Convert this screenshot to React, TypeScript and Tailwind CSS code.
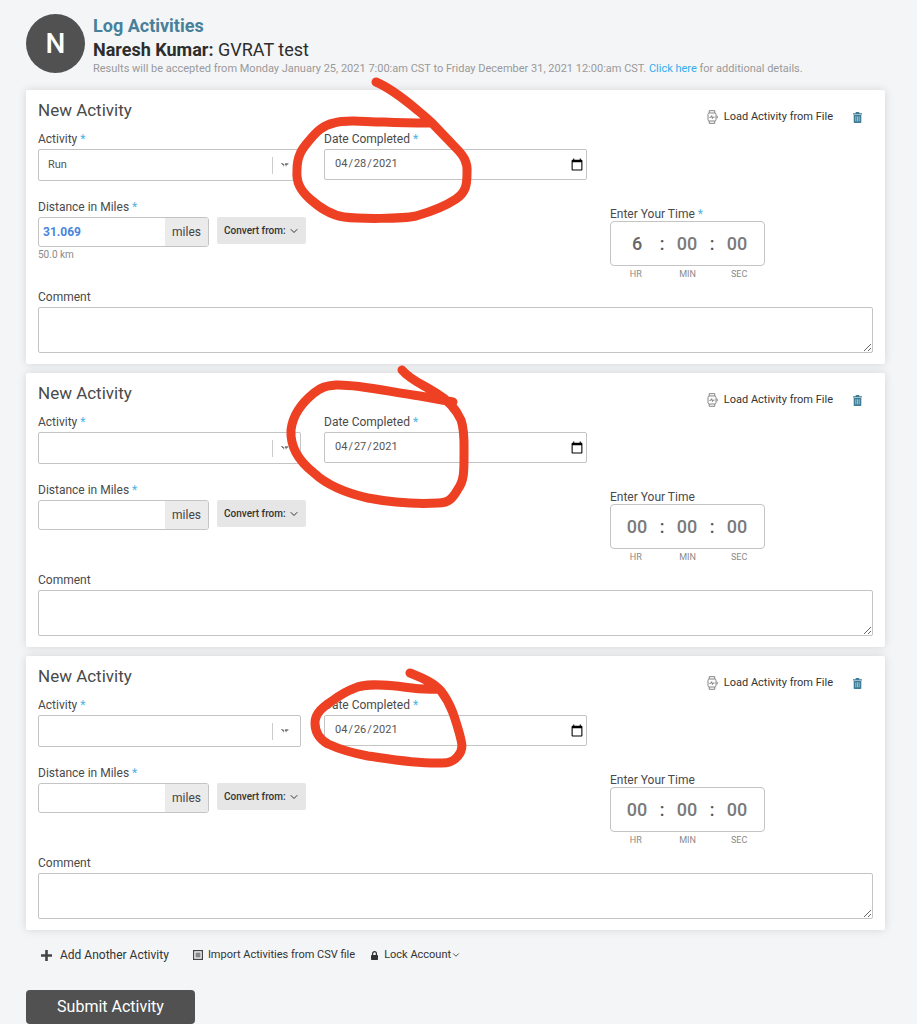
import { useId, useState } from "react";
import { ChevronDown } from "lucide-react";

type Entry = {
    activity: string;
    date: string;
    miles: string;
    hr: string;
    min: string;
    sec: string;
    comment: string;
};

const initialEntries: Entry[] = [
    { activity: 'Run', date: '2021-04-28', miles: '31.069', hr: '6', min: '', sec: '', comment: '' },
    { activity: '', date: '2021-04-27', miles: '', hr: '', min: '', sec: '', comment: '' },
    { activity: '', date: '2021-04-26', miles: '', hr: '', min: '', sec: '', comment: '' },
];

// hand drawn circles round the dates, origin is the top left of the date field
const marks = [
    "M52 -50 C66 -44 80 -33 92 -23 C98 -18 103 -14 108 -9 L132 16 C140 24 144 31 143 41 C143 53 142 60 132 67 C120 75 106 80 92 84 C78 87 35 87 20 85 C5 83 -6 74 -14 67 C-24 58 -28 50 -27 38 C-27 24 -22 17 -16 10 C-8 0 -1 -7 10 -9 C22 -13 40 -10 60 -10 C80 -9 95 -9 106 -9",
    "M78 -45 C86 -35 100 -30 112 -22 C124 -15 132 -6 137 5 C141 16 140 30 140 42 C140 56 140 66 134 74 C129 83 125 88 114 88 C95 89 70 88 44 83 C22 78 4 71 -10 58 C-24 47 -34 32 -33 15 C-31 -2 -20 -14 -10 -22 C-3 -28 2 -29 12 -30 C35 -31 70 -22 96 -19 L129 -13",
    "M86 -25 C98 -20 109 -16 117 -7 C127 6 131 20 135 34 C138 45 140 51 134 58 C130 63 126 65 118 65 C92 66 65 61 44 58 C28 55 15 51 4 46 C-5 41 -9 34 -9 25 C-9 15 -1 9 8 3 C16 -3 23 -7 31 -10 C42 -15 60 -13 72 -12 C88 -10 95 -8 113 -9",
];

function WatchIcon() {
    return (
        <svg className="h-[14px] w-[11px] shrink-0" viewBox="0 0 11 14" fill="none" stroke="#777" strokeWidth="0.9" aria-hidden="true">
            <rect x="1" y="3" width="8" height="8" rx="1.5" />
            <path d="M2.2 3V.7h5.6V3M2.2 11v2.3h5.6V11M10.2 5.8v2.6" />
            <path d="M2.5 7.5l1.3-.3.9-1.5.7 2.8.8-1.4h1.3" strokeWidth="1" />
        </svg>
    );
}

function TrashIcon() {
    return (
        <svg className="h-[11px] w-[9px]" viewBox="0 0 9 11" aria-hidden="true">
            <path d="M0 1.2h2.7V0h3.6v1.2H9v1.3H0z" fill="#3f7d96" />
            <path d="M.7 3h7.6v7.2a.8.8 0 0 1-.8.8h-6a.8.8 0 0 1-.8-.8z" fill="#3f7d96" />
            <path d="M2.8 4.3v5M4.5 4.3v5M6.2 4.3v5" stroke="#b5d0da" strokeWidth="0.8" />
        </svg>
    );
}

function Star() {
    return <span className="text-[#4db3e6]"> *</span>;
}

function ActivityCard({ entry, mark, onChange }: { entry: Entry, mark: string, onChange: (e: any) => void }) {
    const id = useId();
    const labelClass = "mb-[3px] block text-[12px] leading-[14px] text-[#4a4a4a]";
    const timeClass = "w-[30px] bg-transparent text-center text-[18px] font-medium text-[#666] outline-none placeholder:text-[#7a7a7a]";

    return (
        <section className="rounded-xs bg-white px-3 pt-2 pb-[11px] shadow-[0_0_10px_rgba(0,0,0,0.13)]">
            <div className="flex h-[26px] items-start justify-between">
                <h2 className="text-[17px] leading-6 text-[#4a4a4a]">New Activity</h2>
                <div className="flex items-center gap-5 self-end pr-[11px]">
                    <button type="button" className="flex items-center gap-[6px] text-[11px] leading-[14px] text-[#333]">
                        <WatchIcon />
                        Load Activity from File
                    </button>
                    <button type="button" aria-label="Delete activity"><TrashIcon /></button>
                </div>
            </div>

            <div className="mt-2 grid grid-cols-3 gap-x-[23px]">
                <div>
                    <label className={labelClass} htmlFor={id + 'activity'}>Activity<Star /></label>
                    <div className="relative">
                        <select id={id + 'activity'} name="activity" value={entry.activity} onChange={onChange} className="block h-8 w-full appearance-none rounded-xs border border-[#c4c4c4] bg-white px-[9px] text-[11px] text-[#555]">
                            <option value=""></option>
                            <option value="Run">Run</option>
                            <option value="Walk">Walk</option>
                        </select>
                        <div className="pointer-events-none absolute inset-y-0 right-3 flex items-center gap-2">
                            <span className="h-[17px] w-px bg-[#ccc]" />
                            <svg className="h-1 w-2" viewBox="0 0 8 4" fill="#777" aria-hidden="true">
                                <path d="M0 .3h2.2v.8h.9v2.2h-.9V2H1V1H0zM3.9.3h3.6v1h-.8v.8H5.6v1.2h-1V2h-.7z" />
                            </svg>
                        </div>
                    </div>
                </div>
                <div className="relative">
                    <label className={labelClass} htmlFor={id + 'date'}>Date Completed<Star /></label>
                    <input id={id + 'date'} type="date" name="date" value={entry.date} onChange={onChange} className="block h-[31px] w-full rounded-xs border border-[#c4c4c4] bg-white pr-[2px] pl-[9px] text-[11px] text-[#555] [&::-webkit-calendar-picker-indicator]:size-[14px] [&::-webkit-calendar-picker-indicator]:bg-contain [&::-webkit-calendar-picker-indicator]:p-0" />
                    <svg className="pointer-events-none absolute top-0 left-0 h-[100px] w-[150px] overflow-visible" viewBox="0 0 150 100" fill="none" stroke="#ee4023" strokeWidth="9" strokeLinecap="round" strokeLinejoin="round" aria-hidden="true">
                        <path d={mark} />
                    </svg>
                </div>
            </div>

            <div className="mt-[19px] grid grid-cols-3 gap-x-[23px]">
                <div>
                    <label className={labelClass} htmlFor={id + 'miles'}>Distance in Miles<Star /></label>
                    <div className="flex items-start gap-2">
                        <div className="flex h-[30px] w-[171px] shrink-0 overflow-hidden rounded-[3px] border border-[#c4c4c4]">
                            <input id={id + 'miles'} type="text" name="miles" value={entry.miles} onChange={onChange} className="min-w-0 flex-1 px-1 text-[12px] font-bold text-[#4a86dc] outline-none" />
                            <span className="flex w-[43px] items-center justify-center bg-[#ebebeb] text-[12px] text-[#444]">miles</span>
                        </div>
                        <button type="button" className="flex h-[27px] w-[89px] shrink-0 items-center gap-[2px] rounded-xs bg-[#e6e6e6] pl-[7px] text-[10px] font-medium text-[#333]">
                            Convert from:
                            <ChevronDown size={12} />
                        </button>
                    </div>
                    {
                        entry.miles && <div className="text-[10px] leading-4 text-[#8a8a8a]">{(Number(entry.miles) * 1.609344).toFixed(1)} km</div>
                    }
                </div>
                <div className="col-start-3 pt-[7px]">
                    <div className="text-[12px] leading-[14px] text-[#4a4a4a]">Enter Your Time{entry.hr ? <Star /> : ''}</div>
                    <div className="w-[155px]">
                        <div className="flex h-[45px] items-center rounded border border-[#c4c4c4] pl-[11px] text-[18px] font-medium text-[#555]">
                            <input id={id + 'hr'} type="text" name="hr" placeholder="00" value={entry.hr} onChange={onChange} className={timeClass} />
                            <span className="w-5 text-center">:</span>
                            <input id={id + 'min'} type="text" name="min" placeholder="00" value={entry.min} onChange={onChange} className={timeClass} />
                            <span className="w-5 text-center">:</span>
                            <input id={id + 'sec'} type="text" name="sec" placeholder="00" value={entry.sec} onChange={onChange} className={timeClass} />
                        </div>
                        <div className="grid grid-cols-3 text-center text-[9px] leading-4 text-[#8a8a8a]">
                            <label htmlFor={id + 'hr'}>HR</label>
                            <label htmlFor={id + 'min'}>MIN</label>
                            <label htmlFor={id + 'sec'}>SEC</label>
                        </div>
                    </div>
                </div>
            </div>

            <div className="mt-2">
                <label className={labelClass} htmlFor={id + 'comment'}>Comment</label>
                <textarea id={id + 'comment'} name="comment" value={entry.comment} onChange={onChange} className="block h-[46px] w-full resize rounded-xs border border-[#c4c4c4] bg-white p-2 text-[12px] text-[#555]" />
            </div>
        </section>
    );
}

function App() {
    const [entries, setEntries] = useState(initialEntries);

    const handleChange = (index: number, e: any) => {
        setEntries(entries.map((entry, i) => (
            i === index ? { ...entry, [e.target.name]: e.target.value } : entry
        )));
    };

    return (
        <div className="min-h-screen bg-[#f4f5f7] pt-[14px] pr-8 pl-[26px] font-[Roboto,sans-serif]">
            <header className="flex items-start gap-2">
                <div className="flex size-[59px] shrink-0 items-center justify-center rounded-full bg-[#515151] text-[28px] font-medium text-white">N</div>
                <div>
                    <h1 className="text-[18px] leading-6 font-bold text-[#47809a]">Log Activities</h1>
                    <div className="text-[18px] leading-6 text-[#2d2d2d]"><b>Naresh Kumar:</b> GVRAT test</div>
                    <p className="text-[11px] leading-[14px] text-[#999]">
                        Results will be accepted from Monday January 25, 2021 7:00:am CST to Friday December 31, 2021 12:00:am CST. <a href="#" className="text-[#35adec]">Click here</a> for additional details.
                    </p>
                </div>
            </header>

            <form onSubmit={(e) => e.preventDefault()}>
                <div className="mt-[14px] flex flex-col gap-[9px]">
                    {
                        entries.map((entry, i) => (
                            <ActivityCard key={i} entry={entry} mark={marks[i]} onChange={(e) => handleChange(i, e)} />
                        ))
                    }
                </div>

                <div className="mt-[17px] flex items-center text-[11px] leading-4 text-[#333]">
                    <button type="button" className="ml-[15px] flex items-center gap-2 text-[12px]">
                        <svg className="size-[11px]" viewBox="0 0 11 11" fill="#444" aria-hidden="true">
                            <path d="M4.2 0h2.6v4.2H11v2.6H6.8V11H4.2V6.8H0V4.2h4.2z" />
                        </svg>
                        Add Another Activity
                    </button>
                    <button type="button" className="ml-6 flex items-center gap-[5px]">
                        <svg className="size-[10px]" viewBox="0 0 10 10" aria-hidden="true">
                            <rect x=".6" y=".6" width="8.8" height="8.8" fill="none" stroke="#444" strokeWidth="1.2" />
                            <path d="M2.5 2.5h5v5h-5z" fill="#888" />
                        </svg>
                        Import Activities from CSV file
                    </button>
                    <button type="button" className="ml-4 flex items-center">
                        <svg className="mr-[6px] h-[9px] w-[7px]" viewBox="0 0 7 9" aria-hidden="true">
                            <rect y="4" width="7" height="5" rx=".7" fill="#333" />
                            <path d="M1.6 4.5V2.6a1.9 1.9 0 0 1 3.8 0v1.9" fill="none" stroke="#333" strokeWidth="1.2" />
                        </svg>
                        Lock Account
                        <ChevronDown size={10} />
                    </button>
                </div>

                <button type="submit" className="mt-[27px] block h-[34px] w-[169px] rounded bg-[#515151] text-[16px] text-white">Submit Activity</button>
            </form>
        </div>
    );
}

export default App;
